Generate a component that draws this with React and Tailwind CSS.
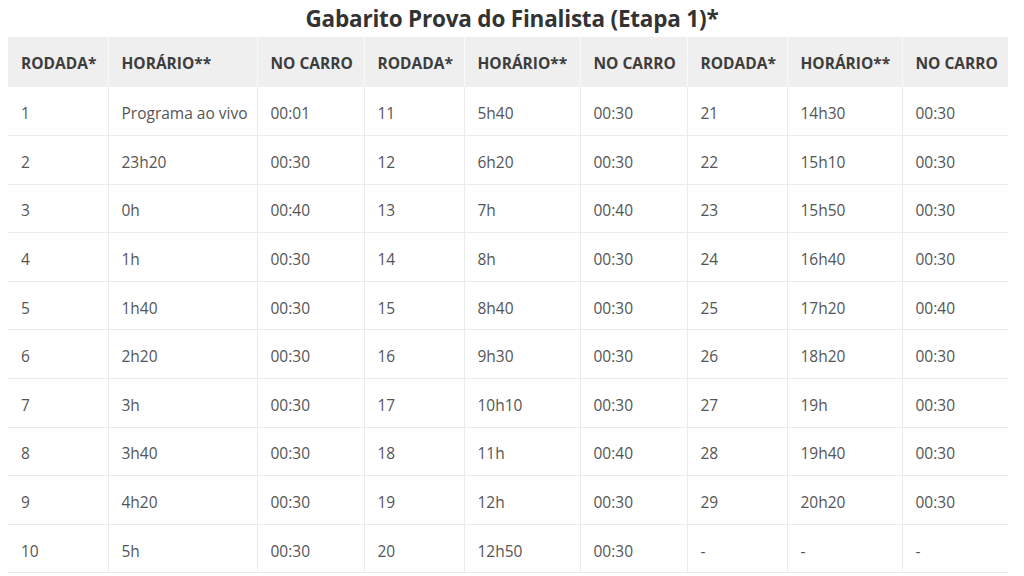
import React from 'react'

const COLS = [100, 149, 107, 100, 116, 107, 100, 115, 106]
const HEAD = ['RODADA*', 'HORÁRIO**', 'NO CARRO']

const ROWS = [
  ['1', 'Programa ao vivo', '00:01', '11', '5h40', '00:30', '21', '14h30', '00:30'],
  ['2', '23h20', '00:30', '12', '6h20', '00:30', '22', '15h10', '00:30'],
  ['3', '0h', '00:40', '13', '7h', '00:40', '23', '15h50', '00:30'],
  ['4', '1h', '00:30', '14', '8h', '00:30', '24', '16h40', '00:30'],
  ['5', '1h40', '00:30', '15', '8h40', '00:30', '25', '17h20', '00:40'],
  ['6', '2h20', '00:30', '16', '9h30', '00:30', '26', '18h20', '00:30'],
  ['7', '3h', '00:30', '17', '10h10', '00:30', '27', '19h', '00:30'],
  ['8', '3h40', '00:30', '18', '11h', '00:40', '28', '19h40', '00:30'],
  ['9', '4h20', '00:30', '19', '12h', '00:30', '29', '20h20', '00:30'],
  ['10', '5h', '00:30', '20', '12h50', '00:30', '-', '-', '-'],
]

export default function App() {
  return (
    <div className="w-[1024px] h-[576px] overflow-hidden bg-white font-['Open_Sans',sans-serif]">
      <h2 className="text-center text-[22.5px] font-bold text-[#333] leading-[37px] tracking-[-0.2px]">
        Gabarito Prova do Finalista (Etapa 1)*
      </h2>

      <table className="ml-2 w-[1000px] table-fixed border-collapse text-left">
        <colgroup>
          {COLS.map((w, i) => (
            <col key={i} style={{ width: w }} />
          ))}
        </colgroup>
        <thead>
          <tr className="h-[50px] bg-[#efefef]">
            {[...HEAD, ...HEAD, ...HEAD].map((h, i) => (
              <th
                key={i}
                className={`px-[13px] pt-[3px] text-[15.5px] font-bold text-[#3d3d3d] whitespace-nowrap ${i < 8 ? 'border-r border-[#f9f9f9]' : ''}`}
              >
                {h}
              </th>
            ))}
          </tr>
        </thead>
        <tbody>
          {ROWS.map((row, r) => (
            <tr key={r} className="h-[48.6px] border-b border-[#ebebeb]">
              {row.map((cell, c) => (
                <td
                  key={c}
                  className={`px-[13px] pt-[5px] text-[15.5px] text-[#555] whitespace-nowrap ${c < 8 ? 'border-r border-[#ebebeb]' : ''}`}
                >
                  {cell}
                </td>
              ))}
            </tr>
          ))}
        </tbody>
      </table>
    </div>
  )
}
